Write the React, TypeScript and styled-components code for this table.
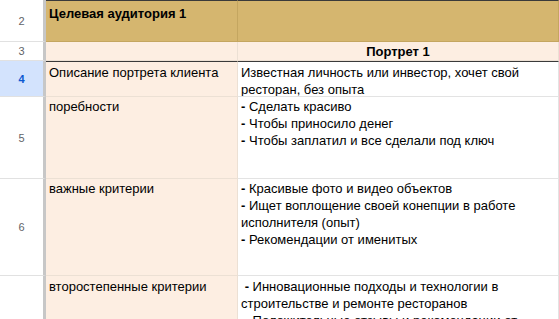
import React from "react";
import styled, { createGlobalStyle } from "styled-components";

const Global = createGlobalStyle`
  html, body { margin: 0; padding: 0; background: #fff; overflow: hidden; }
  body { font-family: "Liberation Sans", Arial, sans-serif; }
  * { box-sizing: border-box; }
`;

const Sheet = styled.div`
  width: 559px;
  height: 319px;
  overflow: hidden;
  display: flex;
  flex-direction: column;
`;

const Row = styled.div<{ $h: number }>`
  display: grid;
  grid-template-columns: 46px 192px 1fr;
  height: ${(p) => p.$h}px;
  flex: 0 0 auto;
`;

const RowHead = styled.div<{ $sel?: boolean }>`
  display: flex;
  align-items: center;
  justify-content: center;
  font-family: "Liberation Sans", Arial, sans-serif;
  font-size: 11px;
  color: ${(p) => (p.$sel ? "#0b57d0" : "#5f6368")};
  font-weight: ${(p) => (p.$sel ? 700 : 400)};
  background: ${(p) => (p.$sel ? "#d3e3fd" : "#ffffff")};
  border-right: 3px solid #c7c7c7;
  border-bottom: 1px solid #e1e1e1;
`;

const Cell = styled.div<{
  $bg: string;
  $line: string;
  $bold?: boolean;
  $center?: boolean;
  $top?: number;
  $pt?: number;
}>`
  background: ${(p) => p.$bg};
  border-right: 1px solid ${(p) => p.$line};
  border-bottom: 1px solid ${(p) => p.$line};
  border-top: ${(p) => (p.$top ? `${p.$top}px solid #3a3a3a` : "none")};
  padding: ${(p) => p.$pt ?? 1}px 3px 0 3px;
  font-size: 13px;
  line-height: 17px;
  color: #000;
  font-weight: ${(p) => (p.$bold ? 700 : 400)};
  text-align: ${(p) => (p.$center ? "center" : "left")};
  overflow: hidden;
`;

const B = styled.b`
  font-weight: 700;
`;

const GOLD = "#d5b66f";
const GOLD_LINE = "#c4a660";
const PEACH = "#fdeee2";
const PEACH_LINE = "#ece0d4";
const WHITE = "#ffffff";
const WHITE_LINE = "#e3e3e3";

const Line = styled.div``;

const Dash = ({ children, lead }: { children: React.ReactNode; lead?: boolean }) => (
  <Line>
    {lead ? "\u00a0" : ""}
    <B>-</B> {children}
  </Line>
);

export default function App() {
  return (
    <>
      <Global />
      <Sheet>
        <Row $h={42}>
          <RowHead>2</RowHead>
          <Cell $bg={GOLD} $line={GOLD_LINE} $bold $top={1} $pt={4}>
            Целевая аудитория 1
          </Cell>
          <Cell $bg={GOLD} $line={GOLD_LINE} $top={1} />
        </Row>
        <Row $h={19}>
          <RowHead>3</RowHead>
          <Cell $bg={PEACH} $line={PEACH_LINE} />
          <Cell $bg={PEACH} $line={PEACH_LINE} $bold $center>
            Портрет 1
          </Cell>
        </Row>
        <Row $h={36}>
          <RowHead $sel>4</RowHead>
          <Cell $bg={PEACH} $line={PEACH_LINE} $top={1} $pt={2}>
            Описание портрета клиента
          </Cell>
          <Cell $bg={WHITE} $line={WHITE_LINE} $top={1} $pt={2}>
            Известная личность или инвестор, хочет свой ресторан, без опыта
          </Cell>
        </Row>
        <Row $h={82}>
          <RowHead>5</RowHead>
          <Cell $bg={PEACH} $line={PEACH_LINE}>
            поребности
          </Cell>
          <Cell $bg={WHITE} $line={WHITE_LINE}>
            <Dash>Сделать красиво</Dash>
            <Dash>Чтобы приносило денег</Dash>
            <Dash>Чтобы заплатил и все сделали под ключ</Dash>
          </Cell>
        </Row>
        <Row $h={97}>
          <RowHead>6</RowHead>
          <Cell $bg={PEACH} $line={PEACH_LINE}>
            важные критерии
          </Cell>
          <Cell $bg={WHITE} $line={WHITE_LINE}>
            <Dash>Красивые фото и видео объектов</Dash>
            <Dash>Ищет воплощение своей конепции в работе исполнителя (опыт)</Dash>
            <Dash>Рекомендации от именитых</Dash>
          </Cell>
        </Row>
        <Row $h={130}>
          <RowHead>7</RowHead>
          <Cell $bg={PEACH} $line={PEACH_LINE} $pt={2}>
            второстепенные критерии
          </Cell>
          <Cell $bg={WHITE} $line={WHITE_LINE} $pt={2}>
            <Dash lead>Инновационные подходы и технологии в строительстве и ремонте ресторанов</Dash>
            <Dash lead>Положительные отзывы и рекомендации от</Dash>
          </Cell>
        </Row>
      </Sheet>
    </>
  );
}
